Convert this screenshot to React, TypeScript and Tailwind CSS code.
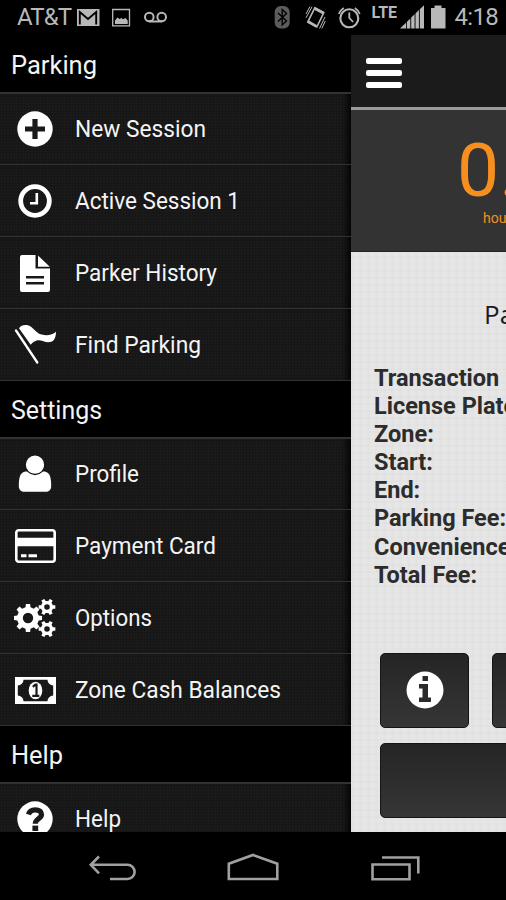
import React from "react";

interface MenuItem {
  label: string;
  width: number;
  icon: React.ReactNode;
}

interface MenuSection {
  title: string;
  width: number;
  items: MenuItem[];
}

// Closed outline of a gear with the given number of teeth
const gearPath = (
  cx: number,
  cy: number,
  outer: number,
  inner: number,
  hole: number,
  teeth: number,
) => {
  const step = (Math.PI * 2) / teeth;
  const points: string[] = [];
  for (let i = 0; i < teeth; i++) {
    [
      [inner, -0.29],
      [outer, -0.19],
      [outer, 0.19],
      [inner, 0.29],
    ].forEach(([r, k]) => {
      const t = (i + k) * step;
      points.push(`${cx + r * Math.cos(t)} ${cy + r * Math.sin(t)}`);
    });
  }
  return `M${points.join("L")}Z M${cx - hole} ${cy}a${hole} ${hole} 0 1 0 ${hole * 2} 0a${hole} ${hole} 0 1 0 ${-hole * 2} 0Z`;
};

const PlusIcon = () => (
  <svg width="36" height="36" viewBox="0 0 36 36">
    <circle cx="18" cy="18" r="17.7" fill="#fff" />
    <path d="M18 8v20M8 18h20" stroke="#1a1a1a" strokeWidth="5.2" />
  </svg>
);

const QuestionIcon = () => (
  <svg width="36" height="36" viewBox="0 0 36 36" fill="none">
    <circle cx="18" cy="18" r="17.7" fill="#fff" />
    <path
      d="M11.5 13.500q1.200-4.700 6.700-4.700c4.200 0 6.300 2 6.300 4.700 0 4.200-6.200 4-6.200 9.200"
      stroke="#1a1a1a"
      strokeWidth="5.2"
    />
    <path d="M18.300 24.600v5.400" stroke="#1a1a1a" strokeWidth="5.8" />
  </svg>
);

const InfoIcon = () => (
  <svg width="38" height="38" viewBox="0 0 38 38">
    <circle cx="19" cy="19" r="18.5" fill="#fff" />
    <path d="M16.500 5h5.500v5h-5.500ZM13 13h9v13.500h3V31H13v-4.500h3.500v-9H13Z" fill="#2b2b2b" />
  </svg>
);

const ClockIcon = () => (
  <svg width="34" height="34" viewBox="0 0 34 34" fill="none" stroke="#fff">
    <circle cx="17" cy="17" r="14.3" strokeWidth="4.8" />
    <path d="M18.800 9v10.200H12" strokeWidth="2.6" />
  </svg>
);

const FileIcon = () => (
  <svg width="30" height="37" viewBox="0 0 30 37" fill="#fff">
    <path
      fillRule="evenodd"
      d="M2 0h13.500v13.500H30V35a2 2 0 0 1-2 2H2a2 2 0 0 1-2-2V2a2 2 0 0 1 2-2ZM6 21v2.600h18V21ZM6 27v2.600h18V27Z"
    />
    <path d="M18 0.400 29.800 11.800H18Z" />
  </svg>
);

const FlagIcon = () => (
  <svg width="43" height="43" viewBox="0 0 43 43" fill="#fff">
    <path d="M2 6.500 23.300 38.500" stroke="#fff" strokeWidth="2.3" strokeLinecap="round" />
    <path d="M5 4.200C7 1 11 .3 14 1.300 18 2.500 20 6 24 9c4 2.700 13.500 3.500 18-1.200 0 3.500-.8 6.500-2 8-1.500 2-3.500 2.400-5.700 2.400-4 0-8-3-11.600-1.700-2.200.8-4.300 2-6 4.300Z" />
  </svg>
);

const UserIcon = () => (
  <svg width="34" height="38" viewBox="0 0 34 38" fill="#fff">
    <path d="M7.500 16.500C2 17.200.8 23 .8 31c0 3.600 2.200 5.800 5.700 5.800h21c3.500 0 5.700-2.200 5.700-5.800 0-8-1.200-13.800-6.700-14.500Z" />
    <circle cx="17" cy="9.7" r="9.8" stroke="#171717" strokeWidth="1.3" />
  </svg>
);

const CardIcon = () => (
  <svg width="41" height="34" viewBox="0 0 41 34" fill="#fff">
    <rect x="1.3" y="1.3" width="38.4" height="31.4" rx="2.5" fill="none" stroke="#fff" strokeWidth="2.6" />
    <path d="M2 8.800h37v8.400H2ZM6 25.200h5.500v3H6ZM13.500 25.200H22v3h-8.500Z" />
  </svg>
);

const GearsIcon = () => (
  <svg width="42" height="38" viewBox="0 0 42 38" fill="#fff" fillRule="evenodd">
    <path d={gearPath(14, 19, 14.2, 11, 5.2, 8)} />
    <path d={gearPath(33, 8, 8.5, 6.2, 2.8, 6)} />
    <path d={gearPath(33, 30, 8.5, 6.2, 2.8, 6)} />
  </svg>
);

const CashIcon = () => (
  <svg width="41" height="27" viewBox="0 0 41 27">
    <path
      fill="#fff"
      fillRule="evenodd"
      d="M0 0h41v27H0ZM8.500 2.800A5.700 5.700 0 0 1 2.800 8.500v10a5.700 5.700 0 0 1 5.700 5.700h24a5.700 5.700 0 0 1 5.700-5.700v-10a5.700 5.700 0 0 1-5.700-5.700Z"
    />
    <ellipse cx="20.5" cy="13.5" rx="6.8" ry="8.8" fill="#fff" />
    <path d="m17.800 9.800 2.500-2.200h1.200v10.300M17.300 18.800h7" fill="none" stroke="#1a1a1a" strokeWidth="2.2" />
  </svg>
);

const sections: MenuSection[] = [
  {
    title: "Parking",
    width: 86,
    items: [
      { label: "New Session", width: 131, icon: <PlusIcon /> },
      { label: "Active Session 1", width: 165, icon: <ClockIcon /> },
      { label: "Parker History", width: 142, icon: <FileIcon /> },
      { label: "Find Parking", width: 126, icon: <FlagIcon /> },
    ],
  },
  {
    title: "Settings",
    width: 91,
    items: [
      { label: "Profile", width: 64, icon: <UserIcon /> },
      { label: "Payment Card", width: 141, icon: <CardIcon /> },
      { label: "Options", width: 77, icon: <GearsIcon /> },
      { label: "Zone Cash Balances", width: 206, icon: <CashIcon /> },
    ],
  },
  {
    title: "Help",
    width: 52,
    items: [{ label: "Help", width: 46, icon: <QuestionIcon /> }],
  },
];

const details = [
  "Transaction",
  "License Plate:",
  "Zone:",
  "Start:",
  "End:",
  "Parking Fee:",
  "Convenience Fee:",
  "Total Fee:",
];

const StatusBar = () => (
  <div className="flex h-[35px] shrink-0 items-center bg-black text-[#b8b8b8]">
    <span className="ml-[17px] w-[60px] whitespace-nowrap text-[24px] leading-[35px] tracking-[-0.9px]">
      AT&amp;T
    </span>
    <svg width="100" height="35" viewBox="77 0 100 35" fill="none" stroke="#b8b8b8">
      <path d="M76.500 9h23v17h-23Z" fill="#b8b8b8" stroke="none" />
      <path d="M79.800 24.500V12l8.200 7 8.200-7v12.500" stroke="#000" strokeWidth="1.9" />
      <path d="M112.700 9.500h16.800v16.300h-16.800Z" strokeWidth="1.3" />
      <path d="M115 24v-3.500l2.500-3 2 1.500 2-1 1.500 1.300 2.500-1.300 2.200 2.500V24Z" fill="#b8b8b8" stroke="none" />
      <g strokeWidth="2">
        <circle cx="149.3" cy="17" r="4.3" />
        <circle cx="161.7" cy="17" r="4.3" />
        <path d="M149 21.500h13" />
      </g>
    </svg>
    <svg className="ml-auto" width="176" height="35" viewBox="272 0 176 35" fill="none" stroke="#b8b8b8">
      <rect x="274.7" y="6" width="15" height="22.5" rx="6" fill="#5c5c5c" stroke="none" />
      <path d="m278 13 8.500 8-4.300 4V9.500l4.300 4-8.500 8" stroke="#000" strokeWidth="1.4" />
      <path d="m314.800 7.800 9 4.700-7 14.500-9-5Z" strokeWidth="1.6" />
      <path d="m314.800 8.500 8.500 4.500M308 21.500l8.500 4.800" strokeWidth="2.6" />
      <path d="m312 6.800-6 11M310 6.500l-4 7.500M325 17l-5.500 11.500M325.300 21l-3.500 7.500" strokeWidth="1" />
      <circle cx="349.3" cy="18.3" r="9" strokeWidth="2.1" />
      <path d="M349.300 12.500V18l3.800 4" strokeWidth="1.8" />
      <path d="M338.800 14q1.500-4 5-6M359.800 14q-1.500-4-5-6" strokeWidth="1.7" />
      <text x="371.5" y="18.3" fill="#b8b8b8" stroke="none" fontSize="16" fontWeight="700" textLength="25.5">
        LTE
      </text>
      <path
        d="M400 28.500l6-5.800v5.800ZM406.800 28.500v-6.600l3.500-3.400v10ZM411.200 28.500V17.600l3.400-3.300v14.200ZM415.500 28.500V13.400l3.400-3.300v18.400ZM419.800 28.500V9.200l4.200-4v23.300Z"
        fill="#b8b8b8"
        stroke="none"
      />
      <path d="M431 8h3.500V5.500h7V8h4v20.500H431Z" fill="#b8b8b8" stroke="none" />
    </svg>
    <span className="mr-[8px] w-[50px] whitespace-nowrap text-right text-[24px] leading-[35px] tracking-[-0.7px]">
      4:18
    </span>
  </div>
);

// Stretches each label to a fixed width
const Label: React.FC<{ text: string; width: number; size: number }> = ({ text, width, size }) => (
  <svg width={width + 4} height="36" className="shrink-0 overflow-visible" fill="#f4f4f4">
    <text x="0" y="26" fontSize={size} textLength={width} lengthAdjust="spacingAndGlyphs">
      {text}
    </text>
  </svg>
);

const Sidebar = () => (
  <nav className="w-[351px] shrink-0 overflow-hidden bg-black">
    {sections.map((section, index) => (
      <section key={section.title}>
        <h2
          className={`flex h-[57px] items-center pl-[11px] pt-[4px] ${index > 0 ? "border-t border-[#303030]" : ""}`}
        >
          <Label text={section.title} width={section.width} size={26} />
        </h2>
        <ul>
          {section.items.map((item) => (
            <li
              key={item.label}
              className="flex h-[72px] items-center border-t border-[#323232] bg-[#181818] bg-[repeating-linear-gradient(0deg,#ffffff04_0_1px,transparent_1px_3px),repeating-linear-gradient(90deg,#00000020_0_1px,transparent_1px_3px)] pt-[1px] text-white shadow-[inset_-8px_0_7px_-5px_#000] first:border-t-2 first:pt-0"
            >
              <span className="flex w-[70px] shrink-0 justify-center">{item.icon}</span>
              <span className="ml-[5px]">
                <Label text={item.label} width={item.width} size={24} />
              </span>
            </li>
          ))}
        </ul>
      </section>
    ))}
  </nav>
);

const SessionPanel = () => (
  <main className="flex w-[360px] shrink-0 flex-col overflow-hidden bg-[#e6e6e6] bg-[repeating-linear-gradient(0deg,#00000003_0_2px,transparent_2px_7px),repeating-linear-gradient(90deg,#00000003_0_3px,transparent_3px_8px)]">
    <div className="flex h-[75px] shrink-0 flex-col gap-[6px] border-b-[3px] border-[#999b9b] bg-[#1b1b1b] pl-[15px] pt-[23px]">
      <span className="h-[6px] w-[36px] shrink-0 rounded-[2px] bg-white" />
      <span className="h-[6px] w-[36px] shrink-0 rounded-[2px] bg-white" />
      <span className="h-[6px] w-[36px] shrink-0 rounded-[2px] bg-white" />
    </div>
    <div className="h-[142px] shrink-0 border-b border-[#222] bg-[#333] text-[#f78f1e]">
      <div className="h-[98px] pl-[106px] pt-[23px] text-[75px] leading-[75px]">
        <span>0</span>
        <span>.</span>
      </div>
      <div className="pl-[132px] text-[14px] leading-[20px]">hours</div>
    </div>
    <h1 className="mt-[44px] h-[36px] shrink-0 pl-[133px] font-['Open_Sans'] text-[26px] leading-[36px] text-[#1c1c1c]">
      Parking
    </h1>
    <dl className="mt-[32px] pl-[23px] text-[23.5px] font-bold leading-[28.1px] text-[#2c2c2c]">
      {details.map((detail) => (
        <dt key={detail} className="whitespace-nowrap">
          {detail}
        </dt>
      ))}
    </dl>
    <div className="mt-[64px] grid shrink-0 grid-cols-[89px_90px_90px] gap-x-[23px] gap-y-[15px] pl-[29px] text-white">
      <button className="flex h-[75px] items-center justify-center rounded-[5px] border border-[#151515] bg-linear-to-b from-[#252525] to-[#363636]">
        <InfoIcon />
      </button>
      <button className="h-[75px] rounded-[5px] border border-[#151515] bg-linear-to-b from-[#252525] to-[#363636]" />
      <button className="h-[75px] rounded-[5px] border border-[#151515] bg-linear-to-b from-[#252525] to-[#363636]" />
      <button className="col-span-3 h-[75px] rounded-[5px] border border-[#151515] bg-linear-to-b from-[#252525] to-[#363636]" />
    </div>
  </main>
);

const NavBar = () => (
  <div className="flex h-[68px] shrink-0 bg-black">
    <svg width="506" height="68" viewBox="0 832 506 68" fill="none" stroke="#a0a0a0" strokeWidth="2.6">
      <path d="M99 856.500 90.800 864.800l8.200 8.500M91 864.800h36.500a7 7 0 0 1 0 14.200H110" />
      <path d="M228.800 879V863.700L253 855l24.300 8.700V879Z" />
      <path d="M372.500 864.500h37v14.700h-37ZM382 857.500h36.300V873.500" />
    </svg>
  </div>
);

const App = () => (
  <div className="flex h-[900px] w-[506px] flex-col overflow-hidden bg-black font-[Roboto,sans-serif]">
    <StatusBar />
    <div className="flex h-[797px] shrink-0 overflow-hidden">
      <Sidebar />
      <SessionPanel />
    </div>
    <NavBar />
  </div>
);

export default App;
